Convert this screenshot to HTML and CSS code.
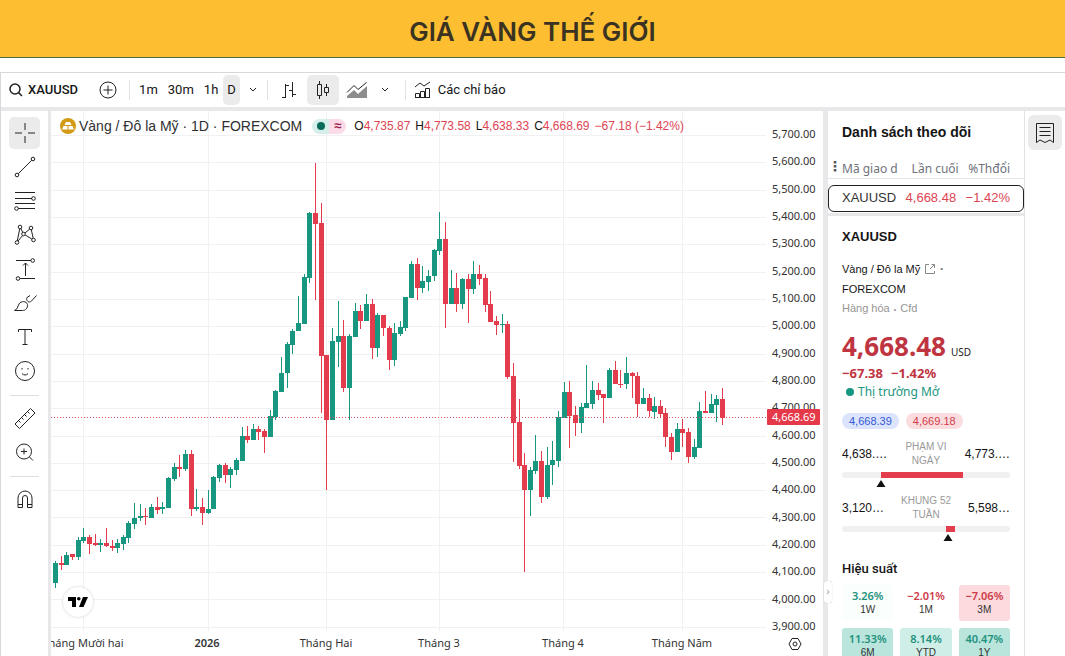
FILE: index.html
```html
<!DOCTYPE html>
<html lang="vi">
<head>
<meta charset="utf-8">
<meta name="viewport" content="width=device-width, initial-scale=1">
<title>Giá vàng thế giới</title>
<link rel="stylesheet" href="styles.css">
</head>
<body>
<header class="banner"><h1>GIÁ VÀNG THẾ GIỚI</h1></header>
<main class="widget">
  <div class="topbar">
    <button class="btn search"><svg width="14" height="14" viewBox="0 0 14 14"><circle cx="6" cy="6" r="5"/><path d="M9.6 9.6 13 13"/></svg>XAUUSD</button>
    <button class="btn add" aria-label="Thêm"><svg width="18" height="18" viewBox="0 0 18 18"><circle cx="9" cy="9" r="8"/><path d="M9 4.5v9M4.5 9h9"/></svg></button>
    <span class="sep"></span>
    <div class="intervals">
      <button class="btn">1m</button><button class="btn">30m</button><button class="btn">1h</button><button class="btn on">D</button>
      <button class="btn" aria-label="Khung thời gian"><svg width="8" height="6" viewBox="0 0 8 6"><path d="m1 1 3 3 3-3"/></svg></button>
    </div>
    <span class="sep"></span>
    <div class="styles">
      <button class="btn tool" aria-label="Thanh"><svg width="16" height="18" viewBox="0 0 16 18"><path d="M4.5 3v14M1 16.500h3.500M4.500 4.500H8M11.500 1v15M8 9.500h3.500M11.500 13.500H15"/></svg></button>
      <button class="btn tool on" aria-label="Nến"><svg width="16" height="20" viewBox="0 0 16 20"><path d="M4.500 1v3M4.500 16v3M2.500 4.500h4v11h-4zM11.500 4v3M11.500 13v3M9.500 7.500h4v5h-4z"/></svg></button>
      <button class="btn tool" aria-label="Vùng"><svg width="22" height="18" viewBox="0 0 22 18"><path class="area" d="M1 17v-2l7-6 4 4 9-8v12z"/><path d="m1 11.500 7-7 4 4 8.500-7"/></svg></button>
      <button class="btn tool narrow" aria-label="Kiểu biểu đồ"><svg width="8" height="6" viewBox="0 0 8 6"><path d="m1 1 3 3 3-3"/></svg></button>
    </div>
    <span class="sep"></span>
    <button class="btn indicators"><svg width="18" height="18" viewBox="0 0 18 18"><path d="m1 6 5-4 4 3 6-4M1.500 16.500v-4h4v4zM6.500 16.500v-6h4v6zM11.500 16.500v-9h4v9zM1 16.500h15"/></svg>Các chỉ báo</button>
  </div>

  <div class="workspace">
    <nav class="drawbar" aria-label="Công cụ vẽ">
      <button class="draw on" aria-label="Con trỏ"><svg width="24" height="24" viewBox="0 0 24 24"><path d="M12 2v7M12 15v7M2 12h7M15 12h7"/></svg></button>
      <button class="draw" aria-label="Đường xu hướng"><svg width="24" height="24" viewBox="0 0 24 24"><circle cx="4" cy="20" r="1.800"/><circle cx="20" cy="4" r="1.800"/><path d="M5.300 18.700 18.700 5.300"/></svg></button>
      <button class="draw" aria-label="Fibonacci"><svg width="24" height="24" viewBox="0 0 24 24"><path d="M2 3.500h20M2 9.500h17M2 14.500h20M5 19.500h17"/><circle cx="20.500" cy="9.500" r="1.800"/><circle cx="3.500" cy="19.500" r="1.800"/></svg></button>
      <button class="draw" aria-label="Mẫu hình"><svg width="24" height="24" viewBox="0 0 24 24"><circle cx="7" cy="4" r="1.800"/><circle cx="18" cy="5" r="1.800"/><circle cx="10.500" cy="11" r="1.800"/><circle cx="4" cy="19.500" r="1.800"/><circle cx="20.500" cy="17" r="1.800"/><path d="M6.700 6 4.300 17.700M8 5.600l1.700 3.800M9.600 12.600 5 18M12 10l4.600-3.800M18.300 6.800l1.900 8.400M12.200 12l6.600 4"/></svg></button>
      <button class="draw" aria-label="Vị thế"><svg width="24" height="24" viewBox="0 0 24 24"><path d="M3 3.500h15M7 21.500h15M12.500 19V6M10 8.500 12.500 6 15 8.500"/><circle cx="19.700" cy="3.500" r="1.800"/><circle cx="5" cy="21.500" r="1.800"/></svg></button>
      <button class="draw" aria-label="Cọ vẽ"><svg width="24" height="24" viewBox="0 0 24 24"><path d="M1.500 19.500c3-1 3-4 4.500-6.500 2-3.500 7.500-3 8.500.5.500 3.500-2 6-5 6zM14 6.500c-1.500 3 2 6 4.500 3.500l5-5.500M17 4.500l-3 2"/></svg></button>
      <button class="draw" aria-label="Văn bản"><svg width="24" height="24" viewBox="0 0 24 24"><path d="M5.500 7V4.500h13V7M12 4.500v15M9.500 19.500h5"/></svg></button>
      <button class="draw" aria-label="Biểu tượng"><svg width="24" height="24" viewBox="0 0 24 24"><circle cx="12" cy="12" r="9.500"/><path d="M9 9v1.500M15 9v1.500M9 14.500c1.500 2 4.500 2 6 0"/></svg></button>
      <hr>
      <button class="draw" aria-label="Thước đo"><svg width="24" height="24" viewBox="0 0 24 24"><path d="m2 18 15.500-15.500 4.500 4.500L6.500 22.500zM5.500 14.500l2 2M8.500 11.500l2 2M11.500 8.500l2 2M14.500 5.500l2 2"/></svg></button>
      <button class="draw" aria-label="Phóng to"><svg width="24" height="24" viewBox="0 0 24 24"><circle cx="11" cy="11.500" r="7.500"/><path d="m16.500 17 3.500 3.500M11 8.500v6M8 11.500h6"/></svg></button>
      <hr>
      <button class="draw" aria-label="Nam châm"><svg width="24" height="24" viewBox="0 0 24 24"><path d="M5 20.500V11a7 7 0 0 1 14 0v9.500h-4.500V11a2.500 2.500 0 0 0-5 0v9.500zM5 17.500h4.500M14.500 17.500H19"/></svg></button>
    </nav>

    <section class="chart">
      <svg class="plot" role="img" aria-label="Biểu đồ nến XAUUSD">
        <g id="grid" class="grid"></g>
        <g id="candles"></g>
        <line class="last" x1="0" x2="100%" y1="306.500" y2="306.500"/>
        <g class="dates">
          <text x="32" y="536">Tháng Mười hai</text>
          <text x="156" y="536" class="year">2026</text>
          <text x="275" y="536">Tháng Hai</text>
          <text x="388" y="536">Tháng 3</text>
          <text x="512" y="536">Tháng 4</text>
          <text x="631" y="536">Tháng Năm</text>
        </g>
      </svg>
      <div class="axis">
        <ul class="prices">
          <li>5,700.00</li><li>5,600.00</li><li>5,500.00</li><li>5,400.00</li><li>5,300.00</li><li>5,200.00</li><li>5,100.00</li><li>5,000.00</li><li>4,900.00</li><li>4,800.00</li><li>4,700.00</li><li>4,600.00</li><li>4,500.00</li><li>4,400.00</li><li>4,300.00</li><li>4,200.00</li><li>4,100.00</li><li>4,000.00</li><li>3,900.00</li>
        </ul>
        <span class="tag">4,668.69</span>
        <button class="gear" aria-label="Cài đặt"><svg width="14" height="14" viewBox="0 0 14 14"><path d="M4 1.500h6L13 7l-3 5.500H4L1 7z"/><circle cx="7" cy="7" r="2"/></svg></button>
      </div>
      <div class="legend">
        <svg width="16" height="16" viewBox="0 0 16 16"><circle class="coin" cx="8" cy="8" r="8"/><path class="bars" d="M6 4h4l1.500 3h-7zM3.500 8h4v3.500H2zM8.500 8h4l1.500 3.500H8.500z"/></svg>
        <span class="name">Vàng / Đô la Mỹ · 1D · FOREXCOM</span>
        <span class="status"><i class="open"></i><i class="approx">≈</i></span>
        <span class="ohlc"><span>O<b>4,735.87</b></span><span>H<b>4,773.58</b></span><span>L<b>4,638.33</b></span><span>C<b>4,668.69</b></span><b>−67.18 (−1.42%)</b></span>
      </div>
      <a class="logo" href="#" aria-label="TradingView"><svg width="20" height="12" viewBox="0 0 20 12"><path d="M0 1h8v10H4V5H0z"/><circle cx="10.800" cy="2.800" r="1.800"/><path d="M15 1h5l-4.500 10h-4.500z"/></svg></a>
    </section>

    <aside class="watch">
      <button class="collapse" aria-label="Thu gọn">›</button>
      <h2>Danh sách theo dõi</h2>
      <table class="list">
        <thead><tr><th>Mã giao d</th><th>Lần cuối</th><th>%Thđổi</th></tr></thead>
      </table>
      <div class="row"><span>XAUUSD</span><b>4,668.48</b><b>−1.42%</b></div>
      <div class="details">
        <h3>XAUUSD</h3>
        <p class="desc">Vàng / Đô la Mỹ <svg width="12" height="12" viewBox="0 0 12 12"><path d="M5 1.500H1.500v9h9V8M7.500 1.500h3V5M10 2 6 6"/></svg> <span>•</span></p>
        <p class="source">FOREXCOM</p>
        <p class="kind">Hàng hóa <small>•</small> Cfd</p>
        <p class="price">4,668.48<small>USD</small></p>
        <p class="change"><span>−67.38</span><span>−1.42%</span></p>
        <p class="market"><i></i>Thị trường Mở</p>
        <div class="pills"><span class="bid">4,668.39</span><span class="ask">4,669.18</span></div>
        <div class="range">
          <div class="ends"><span>4,638.…</span><em>PHẠM VI NGÀY</em><span>4,773.…</span></div>
          <div class="track"><i style="left:23%;width:49%"></i><svg style="left:23%" width="10" height="7" viewBox="0 0 10 7"><path d="m5 0 4.500 7h-9z"/></svg></div>
        </div>
        <div class="range">
          <div class="ends"><span>3,120…</span><em>KHUNG 52 TUẦN</em><span>5,598…</span></div>
          <div class="track"><i style="left:62%;width:5%"></i><svg style="left:63%" width="10" height="7" viewBox="0 0 10 7"><path d="m5 0 4.500 7h-9z"/></svg></div>
        </div>
        <h4>Hiệu suất</h4>
        <div class="perf">
          <div class="cell w"><b>3.26%</b>1W</div><div class="cell down"><b>−2.01%</b>1M</div><div class="cell down pink"><b>−7.06%</b>3M</div>
          <div class="cell g2"><b>11.33%</b>6M</div><div class="cell g1"><b>8.14%</b>YTD</div><div class="cell g2"><b>40.47%</b>1Y</div>
        </div>
      </div>
    </aside>
    <div class="rail"><button class="tab" aria-label="Danh sách theo dõi"><svg width="20" height="22" viewBox="0 0 20 22"><path d="M1.500 1.500h17v19L15 18l-5 2.500L5 18l-3.500 2.500zM4.500 5.500h11M4.500 9.500h11M4.500 13.500h11"/></svg></button></div>
  </div>
</main>
<script src="chart.js"></script>
</body>
</html>
```
FILE: styles.css
```css
* { box-sizing: border-box; }
body { margin: 0; height: 100vh; overflow: hidden; display: flex; flex-direction: column; background: #fff; color: #151515; font: 12px/16px "Liberation Sans", Arial, sans-serif; }
h1, h2, h3, h4, p, ul { margin: 0; padding: 0; }
i, em { font-style: normal; }
button { border: 0; background: none; padding: 0; font: inherit; color: inherit; }
svg { fill: none; stroke: #222; flex: none; }

.banner { flex: none; height: 58px; padding-top: 7px; background: #fdbe31; border-bottom: 1px solid #4b6b45; text-align: center; }
.banner h1 { font: 600 26px/50px Inter, sans-serif; color: #3a3322; }

.widget { flex: 1; min-height: 0; margin-top: 14px; display: flex; flex-direction: column; border: solid #d8d8da; border-width: 1px 0 0 1px; }
.topbar { flex: none; height: 34px; display: flex; align-items: center; font: 13px/18px Roboto, sans-serif; }
.btn { display: flex; align-items: center; justify-content: center; height: 30px; border-radius: 5px; }
.on { background: #ebebeb; }
.sep { width: 1px; height: 20px; background: #e2e2e2; }
.search { gap: 5px; margin-left: 8px; font-weight: 500; }
.search svg { stroke-width: 1.500; }
.add { margin: 0 12px 0 21px; }
.intervals { display: flex; padding: 0 1px 0 4px; }
.intervals .btn { padding: 0 5px; }
.intervals .on { padding: 0 4px; }
.intervals .btn:last-child { padding: 0 9px; }
.styles { display: flex; gap: 2px; padding: 0 10px 0 5px; }
.tool { width: 32px; }
.narrow { width: 20px; }
.area { fill: #8d8d8d; stroke: none; }
.indicators { gap: 6px; padding-left: 8px; }

.workspace { flex: 1; min-height: 0; display: flex; border-top: 4px solid #e8e8ea; }
.drawbar { flex: none; width: 50px; padding: 6px 9px 0; border-right: 3px solid #e8e8ea; display: flex; flex-direction: column; align-items: center; }
.draw { display: grid; place-items: center; width: 31px; height: 32px; margin-bottom: 2px; border-radius: 5px; flex: none; }
.drawbar hr { width: 100%; margin: 6px 0; border: 0; border-top: 1px solid #dedede; }

.chart { position: relative; flex: 1; min-width: 0; display: flex; overflow: hidden; }
.plot { flex: 1; min-width: 0; height: 545px; }
.grid line { stroke: #f1f1f2; }
.last { stroke: #d45763; stroke-dasharray: 1 2; }
.up { fill: #17977f; }
.down-bar { fill: #e33c4c; }
#candles rect { stroke: none; }
.dates { font: 11px "Noto Sans", sans-serif; fill: #333; stroke: none; text-anchor: middle; }
.year { font-weight: 600; }
.axis { position: relative; flex: none; width: 57px; font: 11px/16px "Noto Sans", sans-serif; color: #333; }
.prices { height: 508px; margin-top: 15px; padding-left: 6px; list-style: none; display: flex; flex-direction: column; justify-content: space-between; }
.tag { position: absolute; left: 1px; top: 298px; width: 53px; padding-left: 5px; background: #e5394a; color: #fff; border-radius: 1px; }
.gear { position: absolute; left: 22px; top: 526px; height: 14px; }
.legend { position: absolute; left: 9px; top: 6px; height: 18px; display: flex; align-items: center; white-space: nowrap; }
.coin { fill: #d29a16; stroke: none; }
.bars { fill: #fff; stroke: none; }
.name { font-size: 14px; margin: 0 10px 0 3px; color: #303030; }
.status { display: flex; width: 34px; height: 15px; border-radius: 8px; overflow: hidden; margin-right: 8px; }
.status i { flex: 1; display: grid; place-items: center; font: 700 13px/14px "Liberation Sans", sans-serif; }
.open { background: #d7efeb; }
.open::before { content: ""; width: 8px; height: 8px; border-radius: 50%; background: #0a6b5a; }
.approx { background: #fadbe7; color: #9c2450; }
.ohlc { display: flex; gap: 5px; }
.ohlc b { font-weight: 400; color: #dd4452; }
.logo { position: absolute; left: 12px; top: 476px; width: 30px; height: 30px; display: grid; place-items: center; background: #fff; border-radius: 50%; box-shadow: 0 0 3px #ccc; }
.logo svg { fill: #000; stroke: none; }

.watch { position: relative; flex: none; width: 202px; border-left: 5px solid #e8e8ea; border-right: 1px solid #e2e2e4; }
.collapse { position: absolute; left: -4px; top: 470px; width: 8px; height: 22px; background: #fff; border-radius: 3px; color: #999; font-size: 10px; box-shadow: 0 0 1px #aaa; }
.watch h2 { padding: 9px 14px 0; font: 700 14px/24px "Liberation Sans", sans-serif; white-space: nowrap; }
.list { width: 100%; height: 35px; padding: 16px 14px 0; border-bottom: 1px solid #e4e4e6; border-spacing: 0; position: relative; }
.list::before { content: "⋮"; position: absolute; left: 0; top: 13px; font: 700 14px/18px "DejaVu Sans", sans-serif; color: #555; }
.list th { padding: 0; font: 12px/18px "Noto Sans", sans-serif; color: #70727a; text-align: right; white-space: nowrap; }
.list th:first-child { text-align: left; }
.list th:nth-child(2) { padding-right: 4px; }
.row { display: flex; justify-content: space-between; margin: 6px 0 0; padding: 0 13px; height: 27px; border: 1px solid #222; border-radius: 6px; font: 13px/24px "Liberation Sans", sans-serif; color: #333; }
.row b { font-weight: 400; color: #dd4452; }
.details { margin-top: 1px; padding: 10px 14px 0; border-top: 3px solid #e8e8ea; }
.details h3 { font: 700 13px/22px "Liberation Sans", sans-serif; }
.desc { display: flex; align-items: center; gap: 4px; margin-top: 11px; font-size: 11px; line-height: 20px; white-space: nowrap; }
.desc svg { stroke: #888; }
.desc span { font-size: 8px; color: #777; }
.source { font-size: 11px; line-height: 20px; }
.kind { font-size: 11px; line-height: 18px; color: #959595; }
.kind small { margin: 0 1px; font-size: 7px; line-height: 8px; }
.price { height: 30px; margin-top: 14px; font: 700 26px/30px "Noto Sans", sans-serif; color: #bf3441; white-space: nowrap; }
.price small { margin-left: 5px; font-size: 10px; line-height: 10px; font-weight: 400; color: #222; }
.change { display: flex; gap: 8px; margin-top: 3px; font: 700 13px/18px "Noto Sans", sans-serif; color: #bf3441; }
.market { display: flex; align-items: center; gap: 4px; padding-left: 4px; font: 12px/20px "Noto Sans", sans-serif; color: #209580; }
.market i { width: 8px; height: 8px; border-radius: 50%; background: #149980; }
.pills { display: flex; gap: 7px; margin-top: 11px; font-size: 11px; }
.pills span { padding: 0 7px; border-radius: 8px; }
.bid { background: #dbe3fd; color: #345bd4; }
.ask { background: #fbdcdf; color: #cf3c49; }
.range { height: 54px; padding-top: 11px; }
.ends { display: flex; justify-content: space-between; align-items: center; height: 28px; }
.ends em { width: 60px; text-align: center; font-size: 10px; line-height: 14px; color: #999; }
.track { position: relative; height: 6px; margin-top: 4px; border-radius: 3px; background: #f0f0f0; }
.track i { position: absolute; top: 0; height: 6px; background: #e33c4c; }
.track svg { position: absolute; top: 8px; margin-left: -5px; fill: #111; stroke: none; }
.details h4 { margin-top: 23px; font: 500 13px/18px Roboto, sans-serif; }
.perf { display: grid; grid-template-columns: repeat(3, 1fr); gap: 7px; margin-top: 7px; }
.cell { height: 36px; padding-top: 4px; border-radius: 3px; text-align: center; font-size: 10px; line-height: 14px; color: #333; }
.cell b { display: block; font: 600 11px/14px "Noto Sans", sans-serif; color: #21917c; }
.w { background: #fafefd; }
.down b { color: #cc3946; }
.pink { background: #fcdadd; }
.g1 { background: #cfeee8; }
.g2 { background: #b9e5dd; }
.rail { flex: none; width: 40px; padding: 4px 3px; }
.tab { display: grid; place-items: center; width: 34px; height: 35px; border-radius: 6px; background: #ebebeb; }
```
FILE: chart.js
```js
// Each candle: direction, wick top, body top, body bottom, wick bottom.
const series = `
u 561 563 583 588|d 556 563 565 570|u 552 555 565 565|d 554 554 557 560|u 537 540 557 560|u 528 537 541 543|d 535 537 544 554|d 534 543 545 546|u 539 543 545 552|d 528 543 546 547|
d 540 546 548 551|u 539 543 548 553|u 535 537 544 550|u 521 523 538 543|u 503 518 524 529|u 504 516 518 521|d 508 516 517 525|u 504 507 518 518|d 497 507 510 514|u 502 507 509 514|
u 477 478 508 508|u 463 467 479 481|d 455 467 469 477|u 450 454 469 471|d 450 454 509 516|u 489 507 509 511|d 498 507 513 525|u 490 509 513 514|u 476 477 509 509|u 464 465 478 482|
d 463 465 475 483|u 467 469 475 488|u 458 460 470 475|u 427 436 461 461|d 426 436 440 443|u 424 429 440 440|d 426 429 432 440|d 429 431 437 453|u 410 416 437 437|u 390 391 417 420|
u 357 373 392 392|u 342 344 373 388|u 329 331 345 354|u 296 323 331 331|u 274 277 324 324|u 212 213 278 283|d 163 213 224 300|d 203 223 356 413|d 355 355 420 490|u 328 341 420 420|
u 301 336 342 367|d 320 336 388 392|u 334 336 388 420|u 303 311 337 337|d 305 311 321 329|u 294 304 321 321|d 299 304 348 359|u 313 315 348 357|d 315 315 328 336|d 326 328 360 370|
u 323 333 360 366|u 321 327 334 336|u 297 297 328 331|u 261 264 298 298|d 258 264 288 300|u 266 281 288 293|u 270 276 282 291|u 249 250 276 281|u 212 239 251 255|d 222 239 304 328|
u 270 288 304 304|d 273 288 304 312|u 278 279 304 309|d 274 279 289 323|u 261 274 289 294|d 265 274 279 285|d 274 278 305 312|d 291 304 322 322|d 316 321 325 335|u 314 324 325 333|
d 321 324 377 379|d 363 376 423 462|d 399 422 466 469|d 453 465 490 572|u 467 470 490 516|u 435 461 471 474|d 451 461 497 503|u 447 465 497 499|u 441 460 465 485|u 411 417 461 467|
u 382 392 418 418|d 381 392 416 448|d 406 415 423 436|u 403 407 423 433|u 365 403 408 408|u 381 390 404 409|d 383 390 395 400|d 394 394 398 423|u 368 370 398 398|d 361 370 384 384|
d 370 384 385 388|u 357 373 384 389|d 372 373 376 398|d 372 376 404 417|u 388 398 404 404|d 394 398 411 417|u 397 406 412 419|d 400 406 414 417|d 408 413 437 447|d 433 437 452 460|
u 423 429 452 452|d 419 429 433 447|d 428 432 457 463|u 439 447 457 459|u 402 411 448 448|d 391 411 413 413|u 394 404 413 413|u 395 399 405 422|d 388 399 418 425`;

const NS = "http://www.w3.org/2000/svg";
const TOP = 111;
const FIRST = 4;
const STEP = 667 / 118;

function add(parent, tag, attrs) {
  const node = document.createElementNS(NS, tag);
  for (const key in attrs) node.setAttribute(key, attrs[key]);
  parent.appendChild(node);
}

const grid = document.getElementById("grid");
for (let k = 0; k < 19; k++) {
  const y = Math.round(24 + k * 27.32) + 0.5;
  add(grid, "line", { x1: 0, x2: "100%", y1: y, y2: y });
}
for (const x of [32.5, 157.5, 275.5, 388.5, 512.5, 631.5]) {
  add(grid, "line", { x1: x, x2: x, y1: 0, y2: 520 });
}

const candles = document.getElementById("candles");
series.replace(/\n/g, "").split("|").forEach((item, i) => {
  const [dir, high, top, bottom, low] = item.split(" ");
  const x = Math.round(FIRST + i * STEP);
  const cls = dir === "u" ? "up" : "down-bar";
  add(candles, "rect", { class: cls, x: x, y: high - TOP, width: 1, height: Math.max(1, low - high) });
  add(candles, "rect", { class: cls, x: x - 2, y: top - TOP, width: 5, height: Math.max(1, bottom - top) });
});
```
